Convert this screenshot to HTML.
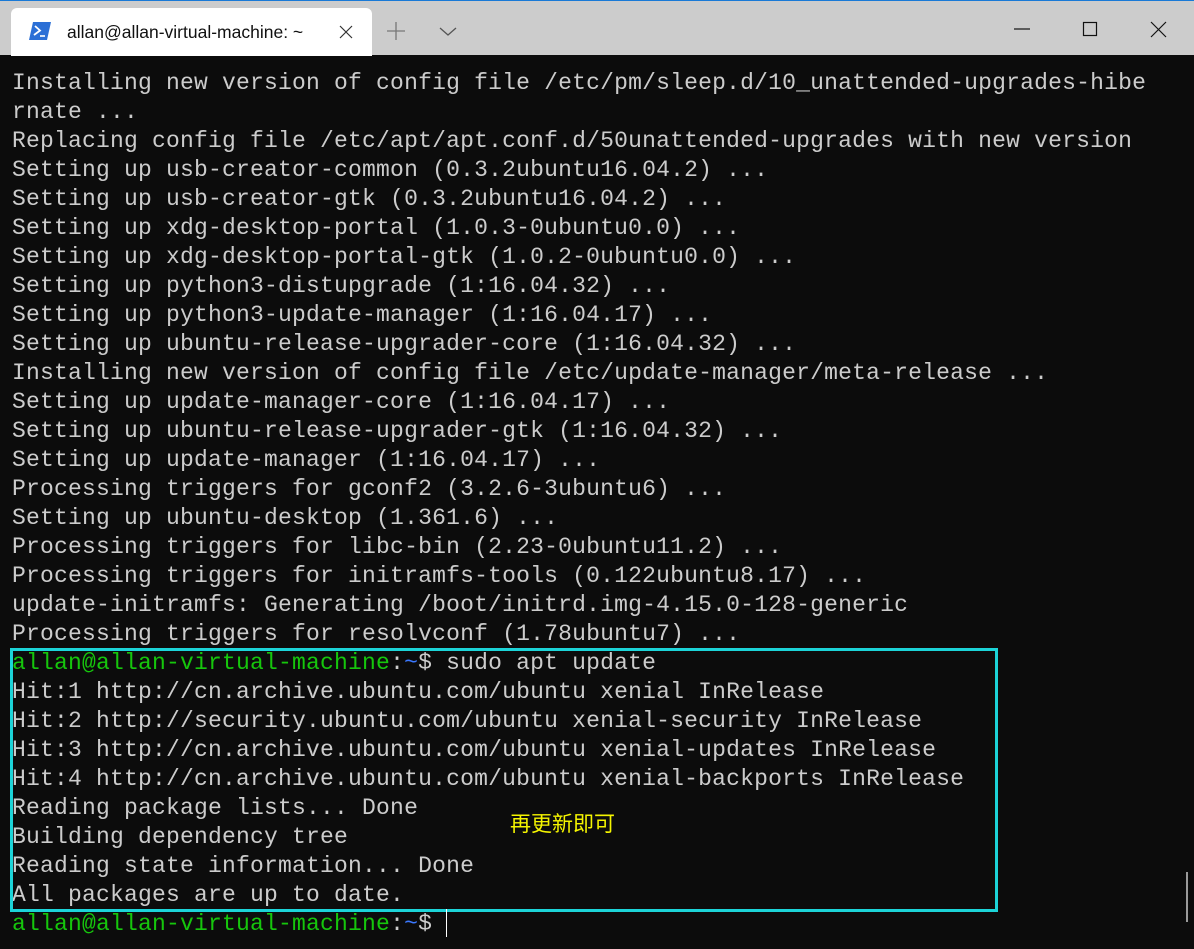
<!DOCTYPE html>
<html><head><meta charset="utf-8"><style>
html,body{margin:0;padding:0;width:1194px;height:949px;overflow:hidden;background:#0c0c0c}
#bar{position:absolute;left:0;top:0;width:1194px;height:55px;background:#cccccc;border-top:1px solid #1979d6;box-sizing:border-box}
#tab{position:absolute;left:11px;top:7px;width:361px;height:48px;background:#fff;border-radius:6px 6px 0 0}
#tab .t{position:absolute;left:56px;top:14px;font:17.5px "Liberation Sans",sans-serif;color:#111}
#term{position:absolute;left:12px;top:69px;font:23px/29px "Liberation Mono",monospace;color:#cccccc;white-space:pre;letter-spacing:0.2px}
.g{color:#16c60c}.b{color:#3b78ff}
#box{position:absolute;left:10px;top:648px;width:988px;height:264px;border:3px solid #1cd4d8;box-sizing:border-box}
#cn{position:absolute;left:510px;top:808px;font:21px "Noto Sans CJK SC",sans-serif;color:#f5f500}
#cur{position:absolute;left:446px;top:909px;width:1px;height:28px;background:#fff}
#sb{position:absolute;left:1186px;top:872px;width:2px;height:50px;background:#9a9a9a}
</style></head><body>
<div id="bar">
<div id="tab">
<svg style="position:absolute;left:18px;top:14px" width="22" height="18" viewBox="0 0 22 18"><path d="M4 0H22L18 18H0Z" fill="#2b6fd6"/><path d="M6 4L11 8.5L5 13" stroke="#fff" stroke-width="1.8" fill="none"/><path d="M11 14H16" stroke="#fff" stroke-width="1.6"/></svg>
<span class="t">allan@allan-virtual-machine: ~</span>
<svg style="position:absolute;left:327px;top:16px" width="16" height="16"><path d="M2 2L14 14M14 2L2 14" stroke="#333" stroke-width="1.2"/></svg>
</div>
<svg style="position:absolute;left:386px;top:20px" width="20" height="20"><path d="M10 1V19M1 10H19" stroke="#777" stroke-width="1.3"/></svg>
<svg style="position:absolute;left:439px;top:25px" width="18" height="12"><path d="M1 2L9 9L17 2" stroke="#555" stroke-width="1.3" fill="none"/></svg>
<svg style="position:absolute;left:1013px;top:20px" width="20" height="20"><path d="M1 8H17" stroke="#111" stroke-width="1.2"/></svg>
<svg style="position:absolute;left:1082px;top:20px" width="18" height="18"><rect x="1.5" y="1.5" width="13" height="13" fill="none" stroke="#111" stroke-width="1.2"/></svg>
<svg style="position:absolute;left:1150px;top:20px" width="18" height="18"><path d="M1 1L16 16M16 1L1 16" stroke="#111" stroke-width="1.2"/></svg>
</div>
<div id="term">Installing new version of config file /etc/pm/sleep.d/10_unattended-upgrades-hibe
rnate ...
Replacing config file /etc/apt/apt.conf.d/50unattended-upgrades with new version
Setting up usb-creator-common (0.3.2ubuntu16.04.2) ...
Setting up usb-creator-gtk (0.3.2ubuntu16.04.2) ...
Setting up xdg-desktop-portal (1.0.3-0ubuntu0.0) ...
Setting up xdg-desktop-portal-gtk (1.0.2-0ubuntu0.0) ...
Setting up python3-distupgrade (1:16.04.32) ...
Setting up python3-update-manager (1:16.04.17) ...
Setting up ubuntu-release-upgrader-core (1:16.04.32) ...
Installing new version of config file /etc/update-manager/meta-release ...
Setting up update-manager-core (1:16.04.17) ...
Setting up ubuntu-release-upgrader-gtk (1:16.04.32) ...
Setting up update-manager (1:16.04.17) ...
Processing triggers for gconf2 (3.2.6-3ubuntu6) ...
Setting up ubuntu-desktop (1.361.6) ...
Processing triggers for libc-bin (2.23-0ubuntu11.2) ...
Processing triggers for initramfs-tools (0.122ubuntu8.17) ...
update-initramfs: Generating /boot/initrd.img-4.15.0-128-generic
Processing triggers for resolvconf (1.78ubuntu7) ...
<span class="g">allan@allan-virtual-machine</span>:<span class="b">~</span>$ sudo apt update
Hit:1 http://cn.archive.ubuntu.com/ubuntu xenial InRelease
Hit:2 http://security.ubuntu.com/ubuntu xenial-security InRelease
Hit:3 http://cn.archive.ubuntu.com/ubuntu xenial-updates InRelease
Hit:4 http://cn.archive.ubuntu.com/ubuntu xenial-backports InRelease
Reading package lists... Done
Building dependency tree
Reading state information... Done
All packages are up to date.
<span class="g">allan@allan-virtual-machine</span>:<span class="b">~</span>$ </div>
<div id="box"></div>
<div id="cn">再更新即可</div>
<div id="cur"></div>
<div id="sb"></div>
</body></html>
